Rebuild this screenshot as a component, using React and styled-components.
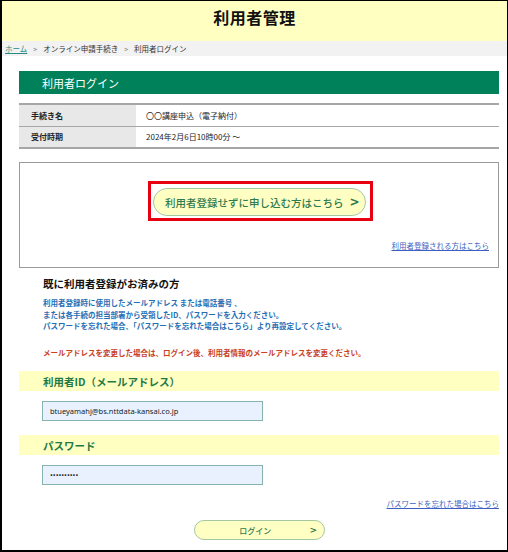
import React from "react";
import styled, { createGlobalStyle } from "styled-components";

const Global = createGlobalStyle`
  html, body { margin: 0; padding: 0; background: #fff; }
  body { font-family: "Noto Sans CJK JP", "Noto Sans", sans-serif; }
  * { box-sizing: border-box; }
`;

const Frame = styled.div`
  width: 508px;
  height: 552px;
  border: 2px solid #000;
  border-top-width: 1px;
  border-right-width: 1px;
  overflow: hidden;
  display: flex;
  flex-direction: column;
`;

const Header = styled.header`
  height: 40px;
  background: #ffffc2;
  display: flex;
  justify-content: center;
  padding-top: 5px;
`;

const Title = styled.h1`
  margin: 0;
  font-size: 16px;
  font-weight: 700;
  line-height: 22px;
  color: #111;
  letter-spacing: 0.5px;
`;

const Crumbs = styled.nav`
  height: 15px;
  background: #f2f2f2;
  display: flex;
  align-items: center;
  gap: 6px;
  padding-left: 3px;
  font-size: 7.5px;
  color: #333;
`;

const CrumbLink = styled.a`
  color: #2a8a80;
  text-decoration: underline;
`;

const Sep = styled.span`
  color: #777;
  font-size: 7px;
`;

const Main = styled.main`
  padding: 15px 8px 0 17px;
  display: flex;
  flex-direction: column;
`;

const GreenBar = styled.div`
  height: 23px;
  background: #00815a;
  color: #fff;
  font-size: 11px;
  display: flex;
  align-items: center;
  padding-left: 23px;
`;

const Table = styled.table`
  margin-top: 9px;
  border-collapse: collapse;
  width: 100%;
  border-top: 2px solid #a6a6a6;
  border-bottom: 2px solid #a6a6a6;
  font-size: 8px;
`;

const Th = styled.th`
  width: 117px;
  background: #e8e8e8;
  text-align: left;
  font-weight: 700;
  padding: 0 0 0 12px;
  height: 22px;
  color: #222;
`;

const Td = styled.td`
  padding: 0 0 0 10px;
  height: 22px;
  color: #222;
`;

const Tr = styled.tr`
  & + & { border-top: 1px solid #a6a6a6; }
`;

const Box = styled.section`
  margin-top: 13px;
  border: 1px solid #9a9a9a;
  height: 106px;
  display: flex;
  flex-direction: column;
  align-items: center;
  padding-top: 18px;
`;

const RedFrame = styled.div`
  border: 3px solid #e60012;
  padding: 4px 4px 2px 2px;
  margin-left: 2px;
`;

const Pill = styled.button`
  font-family: inherit;
  height: ${(p) => p.$h}px;
  width: ${(p) => p.$w}px;
  border-radius: ${(p) => p.$h / 2}px;
  border: 1px solid #a4c8a0;
  background: #ffffc4;
  color: #2f7a4e;
  font-size: ${(p) => p.$fs}px;
  font-weight: 500;
  display: flex;
  align-items: center;
  padding: 0;
  cursor: pointer;
`;

const MainPill = styled(Pill)`
  justify-content: flex-end;
  gap: 6px;
  padding-right: 5px;
`;

const Arrow = styled.span`
  font-family: "DejaVu Sans", sans-serif;
  font-weight: 700;
  font-size: ${(p) => p.$fs}px;
`;

const SmallLink = styled.a`
  font-size: 7.5px;
  line-height: 10px;
  color: #3d5fbf;
  text-decoration: underline;
  align-self: flex-end;
  margin-right: ${(p) => p.$mr || 0}px;
  margin-top: ${(p) => p.$mt || 0}px;
`;

const Heading = styled.h2`
  margin: 8px 0 0 24px;
  font-size: 10.5px;
  font-weight: 700;
  line-height: 16px;
  color: #111;
`;

const Note = styled.p`
  margin: ${(p) => p.$mt}px 0 0 24px;
  font-size: 7.5px;
  font-weight: 700;
  line-height: 11.5px;
  color: ${(p) => p.$c};
`;

const FieldBar = styled.div`
  margin-top: ${(p) => p.$mt}px;
  height: 20px;
  background: #ffffc2;
  color: #1f7a45;
  font-size: 10.5px;
  font-weight: 700;
  display: flex;
  align-items: center;
  padding-left: 24px;
`;

const Input = styled.input`
  margin: 10px 0 0 23px;
  width: 221px;
  height: 20px;
  background: #e8f1fd;
  border: 1px solid #86b3ae;
  font-family: "Noto Sans", sans-serif;
  font-size: 7.5px;
  color: #222;
  padding: 0 7px;
  outline: none;
`;

const LoginRow = styled.div`
  display: flex;
  justify-content: center;
  margin-top: 11px;
  padding-left: 1px;
`;

const LoginText = styled.span`
  flex: 1;
  text-align: center;
  padding-left: 6px;
`;

const LoginPill = styled(Pill)`
  justify-content: space-between;
  padding-right: 7px;
`;

export default function App() {
  return (
    <>
      <Global />
      <Frame>
        <Header>
          <Title>利用者管理</Title>
        </Header>
        <Crumbs>
          <CrumbLink href="#">ホーム</CrumbLink>
          <Sep>&gt;</Sep>
          <span>オンライン申請手続き</span>
          <Sep>&gt;</Sep>
          <span>利用者ログイン</span>
        </Crumbs>
        <Main>
          <GreenBar>利用者ログイン</GreenBar>
          <Table>
            <tbody>
              <Tr>
                <Th>手続き名</Th>
                <Td>〇〇講座申込（電子納付）</Td>
              </Tr>
              <Tr>
                <Th>受付時期</Th>
                <Td>2024年2月6日10時00分 ～</Td>
              </Tr>
            </tbody>
          </Table>
          <Box>
            <RedFrame>
              <MainPill $w={213} $h={28} $fs={10.5}>
                <span>利用者登録せずに申し込む方はこちら</span>
                <Arrow $fs={12}>&gt;</Arrow>
              </MainPill>
            </RedFrame>
            <SmallLink href="#" $mr={9} $mt={20}>利用者登録される方はこちら</SmallLink>
          </Box>
          <Heading>既に利用者登録がお済みの方</Heading>
          <Note $mt={5} $c="#1f6fb5">
            利用者登録時に使用したメールアドレス または電話番号 、<br />
            または各手続の担当部署から受領したID、パスワードを入力ください。<br />
            パスワードを忘れた場合、「パスワードを忘れた場合はこちら」より再設定してください。
          </Note>
          <Note $mt={15} $c="#c8401e">
            メールアドレスを変更した場合は、ログイン後、利用者情報のメールアドレスを変更ください。
          </Note>
          <FieldBar $mt={13}>利用者ID（メールアドレス）</FieldBar>
          <Input defaultValue="btueyamahj@bs.nttdata-kansai.co.jp" />
          <FieldBar $mt={14}>パスワード</FieldBar>
          <Input type="password" defaultValue="abcdefghij" />
          <SmallLink href="#" $mt={14}>パスワードを忘れた場合はこちら</SmallLink>
          <LoginRow>
            <LoginPill $w={131} $h={20} $fs={8}>
              <LoginText>ログイン</LoginText>
              <Arrow $fs={9}>&gt;</Arrow>
            </LoginPill>
          </LoginRow>
        </Main>
      </Frame>
    </>
  );
}
